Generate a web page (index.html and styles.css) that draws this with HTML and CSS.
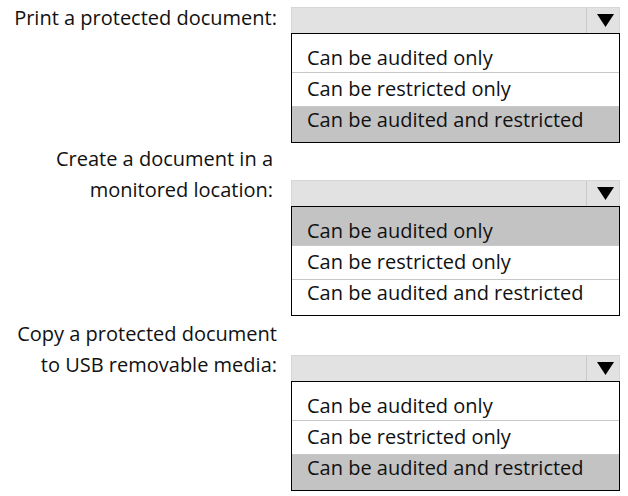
FILE: index.html
```html
<!DOCTYPE html>
<html lang="en">
<head>
<meta charset="utf-8">
<title>Protected document actions</title>
<link rel="stylesheet" href="styles.css">
</head>
<body>
<main class="form">
  <section class="row row-first">
    <div class="label">Print a protected document:</div>
    <div class="control">
      <div class="select"><span class="value"></span><span class="btn"><svg width="17" height="13" viewBox="0 0 17 13"><polygon points="0,0 17,0 8.5,13" fill="#000"/></svg></span></div>
      <ul class="options">
        <li class="opt">Can be audited only</li>
        <li class="opt">Can be restricted only</li>
        <li class="opt is-selected">Can be audited and restricted</li>
      </ul>
    </div>
  </section>
  <section class="row row-second">
    <div class="label">Create a document in a<br>monitored location:</div>
    <div class="control">
      <div class="select"><span class="value"></span><span class="btn"><svg width="17" height="13" viewBox="0 0 17 13"><polygon points="0,0 17,0 8.5,13" fill="#000"/></svg></span></div>
      <ul class="options">
        <li class="opt is-selected">Can be audited only</li>
        <li class="opt">Can be restricted only</li>
        <li class="opt">Can be audited and restricted</li>
      </ul>
    </div>
  </section>
  <section class="row row-third">
    <div class="label">Copy a protected document<br>to USB removable media:</div>
    <div class="control">
      <div class="select"><span class="value"></span><span class="btn"><svg width="17" height="13" viewBox="0 0 17 13"><polygon points="0,0 17,0 8.5,13" fill="#000"/></svg></span></div>
      <ul class="options">
        <li class="opt">Can be audited only</li>
        <li class="opt">Can be restricted only</li>
        <li class="opt is-selected">Can be audited and restricted</li>
      </ul>
    </div>
  </section>
</main>
</body>
</html>
```
FILE: styles.css
```css
html, body {
  margin: 0;
  padding: 0;
  background: #fff;
}
body {
  font-family: "Open Sans", "Noto Sans", sans-serif;
  font-size: 20px;
  color: #111;
}
.form {
  padding-top: 2px;
}
.row {
  display: flex;
  align-items: flex-start;
}
.label {
  box-sizing: border-box;
  width: 277px;
  text-align: right;
  line-height: 31px;
  white-space: nowrap;
}
.row-second .label { padding-right: 4px; }
.control {
  margin-left: 14px;
  width: 329px;
}
.row-first .control { margin-top: 5px; }
.row-second .control { margin-top: 37px; }
.row-third { margin-top: 2px; }
.row-third .control { margin-top: 37px; }
.select {
  box-sizing: border-box;
  height: 26px;
  display: flex;
  background: #e2e2e2;
  border: 1px solid #d6d6d6;
  border-bottom: none;
}
.value {
  flex: 1;
}
.btn {
  width: 33px;
  border-left: 1px solid #cacaca;
  display: flex;
  align-items: center;
  justify-content: flex-end;
  padding-right: 5px;
  box-sizing: border-box;
}
.options {
  list-style: none;
  margin: 0;
  padding: 0;
  border: 1px solid #000;
}
.opt {
  box-sizing: border-box;
  padding-left: 15px;
  border-bottom: 1px solid #c8c8c8;
  white-space: nowrap;
}
.opt:first-child {
  height: 39px;
  padding-top: 8px;
  line-height: 31px;
}
.opt:nth-child(2) {
  height: 34px;
  line-height: 31px;
}
.opt:last-child {
  height: 35px;
  line-height: 26px;
  border-bottom: none;
}
.opt.is-selected {
  background: #c3c3c3;
}
```
